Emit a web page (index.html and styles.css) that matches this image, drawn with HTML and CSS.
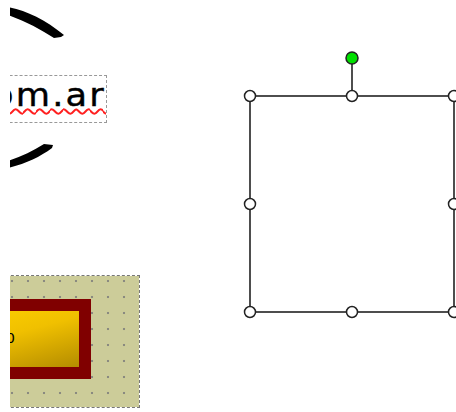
FILE: index.html
```html
<!DOCTYPE html>
<html lang="es">
<head>
  <meta charset="UTF-8">
  <title>Editor</title>
  <link rel="stylesheet" href="styles.css">
</head>
<body>
  <div id="lienzo">
    <svg class="trazos" width="70" height="180" viewBox="0 0 70 180">
      <path d="M8 7 C 25 10 45 19 64 35 L 61 37 L 54 38 C 40 29 25 21 8 15 Z" />
      <path d="M8 161 C 20 157 33 151 44 144 L 53 145 L 52 148 C 40 157 25 164 8 168 Z" />
    </svg>

    <div class="caja-texto">
      <span class="texto">com.ar</span>
    </div>

    <div class="panel">
      <div class="marco">
        <div class="boton"><span class="etiqueta">0</span></div>
      </div>
    </div>

    <svg class="seleccion" width="226" height="290" viewBox="230 40 226 290">
      <rect x="250" y="96" width="204" height="216" class="borde" />
      <line x1="352" y1="64" x2="352" y2="96" class="borde" />
      <circle cx="352" cy="58" r="6" class="girar" />
      <circle cx="250" cy="96" r="5.5" class="punto" />
      <circle cx="352" cy="96" r="5.5" class="punto" />
      <circle cx="454" cy="96" r="5.5" class="punto" />
      <circle cx="250" cy="204" r="5.5" class="punto" />
      <circle cx="454" cy="204" r="5.5" class="punto" />
      <circle cx="250" cy="312" r="5.5" class="punto" />
      <circle cx="352" cy="312" r="5.5" class="punto" />
      <circle cx="454" cy="312" r="5.5" class="punto" />
    </svg>
  </div>
</body>
</html>
```

FILE: styles.css
```css
body {
  margin: 0;
  background-color: white;
  font-family: "DejaVu Sans", sans-serif;
}

#lienzo {
  position: relative;
  margin-left: 10px;
  width: 446px;
  height: 412px;
  overflow: hidden;
}

/* trazos de pincel arriba a la izquierda */
.trazos {
  position: absolute;
  left: -10px;
  top: 0;
}

.trazos path {
  fill: black;
}

.caja-texto {
  position: absolute;
  left: -60px;
  top: 75px;
  width: 157px;
  height: 48px;
  box-sizing: border-box;
  border: 1px dashed #999;
  text-align: right;
  overflow: hidden;
}

.texto {
  display: block;
  font-size: 32px;
  line-height: 39px;
  letter-spacing: 2px;
  color: black;
  -webkit-text-stroke: 0.4px black;
  text-decoration: underline wavy #ff2020;
  text-decoration-thickness: 1.5px;
  text-decoration-skip-ink: none;
  text-underline-offset: 2px;
  white-space: nowrap;
  transform: scaleX(1.1);
  transform-origin: right center;
}

.panel {
  position: absolute;
  left: -100px;
  top: 275px;
  width: 230px;
  height: 133px;
  box-sizing: border-box;
  border: 1px dashed #777;
  background-color: #cccc99;
  background-image: radial-gradient(circle, #8a8a80 1px, transparent 1.6px);
  background-size: 16px 16px;
  background-position: 93px -3px;
  background-clip: padding-box;
}

.marco {
  position: absolute;
  right: 48px;
  top: 23px;
  width: 160px;
  height: 80px;
  box-sizing: border-box;
  border: 12px solid #800000;
}

.boton {
  position: relative;
  height: 100%;
  background: linear-gradient(165deg, #ffd200 0%, #f0c000 45%, #b48c00 100%);
}

.etiqueta {
  position: absolute;
  left: 63px;
  top: 19px;
  font-size: 14px;
  line-height: 16px;
  color: black;
}

.seleccion {
  position: absolute;
  left: 220px;
  top: 40px;
}

.borde {
  fill: none;
  stroke: #222;
  stroke-width: 1.6;
}

.punto {
  fill: white;
  stroke: #222;
  stroke-width: 1.5;
}

.girar {
  fill: #00e000;
  stroke: #222;
  stroke-width: 1.5;
}
```
